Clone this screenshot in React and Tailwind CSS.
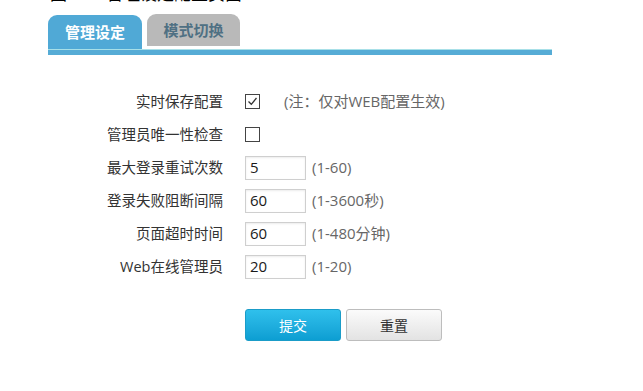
import React from "react";

const font = { fontFamily: "'Open Sans', 'Noto Sans CJK SC', sans-serif" };

function Row({ label, children }) {
  return (
    <div className="flex items-center h-[33px]">
      <div className="w-[175px] text-right text-[14.5px] text-[#333]">{label}</div>
      <div className="ml-[22px] flex items-center">{children}</div>
    </div>
  );
}

function Field({ value, hint }) {
  return (
    <>
      <div className="w-[61px] h-[24px] border border-[#cfcfcf] bg-white flex items-center pl-[4px] text-[15px] text-[#1a1a1a] shadow-[inset_0_1px_2px_rgba(0,0,0,0.08)]">
        {value}
      </div>
      <span className="ml-[6px] text-[15px] text-[#666]">{hint}</span>
    </>
  );
}

function Check({ checked }) {
  return (
    <div className="w-[15px] h-[15px] border border-[#444] bg-white flex items-center justify-center">
      {checked && (
        <svg width="11" height="11" viewBox="0 0 11 11">
          <path d="M1.5 5.5 L4.3 8.3 L9.5 2" fill="none" stroke="#333" strokeWidth="1.3" />
        </svg>
      )}
    </div>
  );
}

export default function App() {
  return (
    <div className="w-[643px] h-[391px] bg-white overflow-hidden" style={font}>
      <div className="pl-[48px]">
        <div className="h-[5px] overflow-hidden">
          <div className="-mt-[16px] pl-[2px] text-[17px] leading-[20px] text-black">图7-11 管理设定配置页面</div>
        </div>
        <div className="flex items-end h-[44px]">
          <div className="w-[94px] h-[34px] rounded-t-[9px] bg-[#50a9d6] flex items-center justify-center text-white font-bold text-[15px]">
            管理设定
          </div>
          <div className="ml-[5px] mb-[3px] w-[93px] h-[32px] rounded-t-[9px] bg-[#b9b9b9] flex items-center justify-center text-[#4f7083] font-semibold text-[15px]">
            模式切换
          </div>
        </div>
        <div className="w-[504px] h-[6px] bg-[#56acd6] border-t border-[#a8e0e8]" />

        <div className="mt-[30px]">
          <Row label="实时保存配置">
            <Check checked />
            <span className="ml-[24px] text-[15px] text-[#666]">(注：仅对WEB配置生效)</span>
          </Row>
          <Row label="管理员唯一性检查">
            <Check />
          </Row>
          <Row label="最大登录重试次数">
            <Field value="5" hint="(1-60)" />
          </Row>
          <Row label="登录失败阻断间隔">
            <Field value="60" hint="(1-3600秒)" />
          </Row>
          <Row label="页面超时时间">
            <Field value="60" hint="(1-480分钟)" />
          </Row>
          <Row label="Web在线管理员">
            <Field value="20" hint="(1-20)" />
          </Row>
        </div>

        <div className="flex mt-[26px] ml-[197px] gap-[5px]">
          <button className="w-[96px] h-[32px] rounded-[3px] bg-gradient-to-b from-[#2fc0ec] to-[#0c9ed2] border border-[#1a9cc8] text-white text-[14px]">
            提交
          </button>
          <button className="w-[96px] h-[32px] rounded-[3px] bg-gradient-to-b from-[#fbfbfb] to-[#e3e3e3] border border-[#bdbdbd] text-[#333] text-[14px]">
            重置
          </button>
        </div>
      </div>
    </div>
  );
}
